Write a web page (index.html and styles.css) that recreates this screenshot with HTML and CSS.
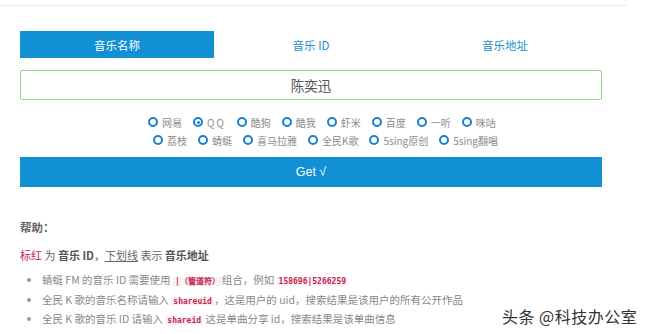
FILE: index.html
```html
<!DOCTYPE html>
<html lang="zh-CN">

<head>
    <meta charset="UTF-8">
    <title>音乐搜索</title>
    <link rel="stylesheet" href="styles.css">
</head>

<body>
    <div class="topline"></div>

    <main class="page">
        <!-- Tabs -->
        <div class="tabs">
            <a href="#" class="tab active">音乐名称</a>
            <a href="#" class="tab">音乐 ID</a>
            <a href="#" class="tab">音乐地址</a>
        </div>

        <input class="search" type="text" value="陈奕迅">

        <!-- Sources -->
        <div class="sources">
            <div class="row first">
                <label class="radio"><span class="dot"></span>网易</label>
                <label class="radio"><span class="dot on"></span><span class="qq">QQ</span></label>
                <label class="radio"><span class="dot"></span>酷狗</label>
                <label class="radio"><span class="dot"></span>酷我</label>
                <label class="radio"><span class="dot"></span>虾米</label>
                <label class="radio"><span class="dot"></span>百度</label>
                <label class="radio"><span class="dot"></span>一听</label>
                <label class="radio"><span class="dot"></span>咪咕</label>
            </div>
            <div class="row second">
                <label class="radio"><span class="dot"></span>荔枝</label>
                <label class="radio"><span class="dot"></span>蜻蜓</label>
                <label class="radio"><span class="dot"></span>喜马拉雅</label>
                <label class="radio"><span class="dot"></span>全民K歌</label>
                <label class="radio"><span class="dot"></span>5sing原创</label>
                <label class="radio"><span class="dot"></span>5sing翻唱</label>
            </div>
        </div>

        <button class="get">Get √</button>

        <!-- Help -->
        <div class="help">
            <h4>帮助：</h4>
            <p><span class="red">标红</span> 为 <b>音乐 ID</b>，<u>下划线</u> 表示 <b>音乐地址</b></p>
            <ul>
                <li>蜻蜓 FM 的音乐 ID 需要使用 <code>|（管道符）</code>组合，例如 <code>158696|5266259</code></li>
                <li>全民 K 歌的音乐名称请输入 <code>shareuid</code>，这是用户的 uid，搜索结果是该用户的所有公开作品</li>
                <li>全民 K 歌的音乐 ID 请输入 <code>shareid</code> 这是单曲分享 id，搜索结果是该单曲信息</li>
            </ul>
        </div>
    </main>

    <div class="watermark">头条 @科技办公室</div>
</body>

</html>
```

FILE: styles.css
```css
body {
    margin: 0;
    font-family: "Noto Sans CJK SC", "Noto Sans", sans-serif;
    color: #666;
    background: #fff;
    overflow: hidden;
}

.topline {
    width: 627px;
    height: 1px;
    margin-top: 5px;
    background: #ececec;
}

.page {
    width: 582px;
    margin-left: 20px;
    padding-top: 25px;
}

/* Tabs */
.tabs {
    display: flex;
    height: 27px;
}

.tab {
    flex: 1;
    display: flex;
    justify-content: center;
    align-items: center;
    font-size: 11.5px;
    color: #1a8fd0;
    text-decoration: none;
}

.tab.active {
    background: #1190d4;
    color: #fff;
}

.search {
    display: block;
    box-sizing: border-box;
    width: 100%;
    height: 30px;
    margin-top: 12px;
    border: 1px solid #93d28f;
    border-radius: 2px;
    text-align: center;
    font-family: inherit;
    font-size: 13.5px;
    color: #555;
    outline: none;
}

/* Radios */
.sources {
    margin-top: 13px;
    font-size: 10px;
    color: #8c8c8c;
}

.row {
    display: flex;
    gap: 11px;
    height: 18px;
    align-items: center;
}

.row.first {
    padding-left: 128px;
}

.row.second {
    padding-left: 133px;
}

.radio {
    display: flex;
    align-items: center;
    gap: 4px;
}

.qq {
    letter-spacing: 2px;
}

.dot {
    box-sizing: border-box;
    width: 10px;
    height: 10px;
    border: 2px solid #1a7fd0;
    border-radius: 50%;
    display: flex;
    justify-content: center;
    align-items: center;
}

.dot.on::after {
    content: "";
    width: 3px;
    height: 3px;
    border-radius: 50%;
    background: #1a7fd0;
}

.get {
    display: block;
    width: 100%;
    height: 30px;
    margin-top: 8px;
    border: none;
    background: #1190d4;
    color: #fff;
    font-family: "Liberation Sans", sans-serif;
    font-size: 12.5px;
}

/* Help */
.help {
    margin-top: 32px;
    font-size: 11px;
}

.help h4 {
    margin: 0;
    font-size: 11.5px;
    color: #666;
    font-weight: bold;
}

.help p {
    margin: 12px 0 0;
    font-size: 11px;
}

.help b {
    color: #555;
}

.help u {
    color: #666;
}

.red {
    color: #c7254e;
}

.help ul {
    margin: 8px 0 0;
    padding-left: 22px;
    font-size: 10.5px;
    color: #888;
    line-height: 17.5px;
}

.help li::marker {
    color: #999;
}

code {
    font-family: "DejaVu Sans Mono", monospace;
    font-size: 8px;
    font-weight: bold;
    color: #c7254e;
    background: #f9f2f4;
    padding: 0 2px;
}

.watermark {
    position: absolute;
    left: 502px;
    top: 304px;
    font-size: 16px;
    letter-spacing: 0.5px;
    color: #333;
    text-shadow: 0 0 2px #fff, 0 0 2px #fff;
}
```
